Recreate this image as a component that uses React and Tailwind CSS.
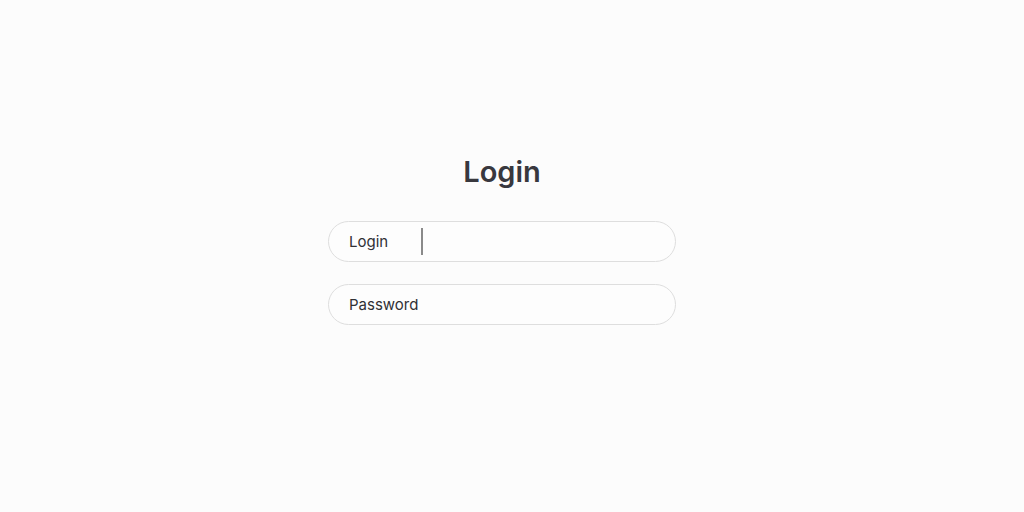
// App.jsx
function Field({ label, caret }) {
  return (
    <div className="flex h-[41px] w-[348px] items-center rounded-full border border-[#dedede] bg-[#fdfdfd] pl-5">
      <span className="pt-[2px] text-[15px] text-[#303035]">{label}</span>
      {caret && <div className="ml-[33px] h-[27px] w-[1.5px] bg-[#8a8a8a]"></div>}
    </div>
  );
}

export default function App() {
  return (
    <div
      className="flex h-[512px] w-full flex-col items-center bg-[#fcfcfc] pr-[20px] pt-[150px]"
      style={{ fontFamily: 'Inter, "Noto Sans", sans-serif' }}
    >
      {/* 标题 */}
      <h1 className="text-[29px] font-semibold leading-[44px] text-[#38383e]">Login</h1>

      {/* 表单 */}
      <div className="mt-[27px] flex flex-col gap-[22px]">
        <Field label="Login" caret />
        <Field label="Password" />
      </div>
    </div>
  );
}
